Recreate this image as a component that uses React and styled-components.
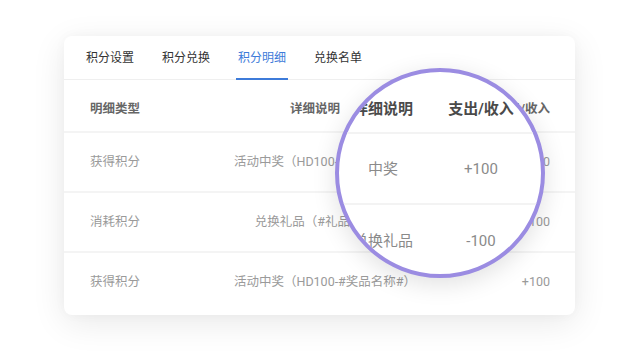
import React from "react";
import styled, { createGlobalStyle } from "styled-components";

const Global = createGlobalStyle`
  html, body { margin: 0; padding: 0; background: #ffffff; }
  body { font-family: Roboto, "Noto Sans CJK SC", sans-serif; }
`;

const Page = styled.div`
  width: 637px;
  height: 354px;
  box-sizing: border-box;
  padding: 36px 62px 0 64px;
  background: #ffffff;
`;

const Card = styled.div`
  position: relative;
  width: 511px;
  height: 279px;
  box-sizing: border-box;
  padding-bottom: 4px;
  background: #ffffff;
  border-radius: 8px;
  box-shadow: 0 8px 34px rgba(0, 0, 0, 0.09), 0 0 12px rgba(0, 0, 0, 0.03);
  display: flex;
  flex-direction: column;
`;

const TabBar = styled.div`
  display: flex;
  gap: 24px;
  height: 43px;
  padding-left: 20px;
  border-bottom: 1px solid #efefef;
`;

const Tab = styled.div`
  padding: 0 2px;
  display: flex;
  align-items: center;
  padding-top: 1px;
  font-size: 12px;
  line-height: 16px;
  color: ${(p) => (p.$active ? "#3d7bd9" : "#333333")};
  border-bottom: 2px solid ${(p) => (p.$active ? "#3d7bd9" : "transparent")};
  margin-bottom: -1px;
`;

const Row = styled.div`
  display: grid;
  grid-template-columns: 130px 210px 120px;
  padding: 0 25px 0 26px;
  align-items: center;
  height: ${(p) => (p.$head ? "51px" : "60px")};
  box-sizing: border-box;
  padding-top: ${(p) => (p.$head ? "6px" : "0")};
  border-top: ${(p) => (p.$first ? "none" : "2px solid #f4f4f4")};
`;

const Cell = styled.div`
  font-size: 12.5px;
  line-height: 16px;
  white-space: nowrap;
  color: ${(p) => (p.$head ? "#666666" : "#9a9a9a")};
  font-weight: ${(p) => (p.$head ? 600 : 400)};
  text-align: ${(p) => p.$align || "left"};
  padding-right: ${(p) => p.$pr || 0}px;
`;

const Lens = styled.div`
  position: absolute;
  left: 271px;
  top: 32px;
  width: 210px;
  height: 210px;
  box-sizing: border-box;
  border-radius: 50%;
  border: 4px solid #9b8ce2;
  background: #ffffff;
  overflow: hidden;
  box-shadow: 0 6px 24px rgba(0, 0, 0, 0.12);
`;

const LensRow = styled.div`
  display: grid;
  grid-template-columns: 88px 108px;
  align-items: center;
  width: 260px;
  margin-left: -4px;
  padding-left: 4px;
  box-sizing: border-box;
  height: ${(p) => (p.$head ? "60px" : "71px")};
  padding-top: ${(p) => (p.$head ? "14px" : "0")};
  border-top: ${(p) => (p.$first ? "none" : "2px solid #f3f3f3")};
`;

const LensCell = styled.div`
  text-align: center;
  white-space: nowrap;
  font-size: 15px;
  line-height: 20px;
  color: ${(p) => (p.$head ? "#4a4a4a" : "#8a8a8a")};
  font-weight: ${(p) => (p.$head ? 700 : 400)};
  margin-top: ${(p) => p.$mt || 0}px;
`;

const tabs = ["积分设置", "积分兑换", "积分明细", "兑换名单"];
const rows = [
  ["获得积分", "活动中奖（HD100-#奖品名称#）", "+100"],
  ["消耗积分", "兑换礼品（#礼品名称#）", "-100"],
  ["获得积分", "活动中奖（HD100-#奖品名称#）", "+100"],
];

export default function App() {
  return (
    <>
      <Global />
      <Page>
        <Card>
          <TabBar>
            {tabs.map((t, i) => (
              <Tab key={t} $active={i === 2}>
                {t}
              </Tab>
            ))}
          </TabBar>
          <Row $head $first>
            <Cell $head>明细类型</Cell>
            <Cell $head $align="right" $pr={90}>
              详细说明
            </Cell>
            <Cell $head $align="right">
              支出/收入
            </Cell>
          </Row>
          {rows.map((r, i) => (
            <Row key={i}>
              <Cell>{r[0]}</Cell>
              <Cell $align="center">{r[1]}</Cell>
              <Cell $align="right">{r[2]}</Cell>
            </Row>
          ))}
          <Lens>
            <LensRow $head $first>
              <LensCell $head>详细说明</LensCell>
              <LensCell $head>支出/收入</LensCell>
            </LensRow>
            <LensRow>
              <LensCell>中奖</LensCell>
              <LensCell>+100</LensCell>
            </LensRow>
            <LensRow>
              <LensCell $mt={2}>兑换礼品</LensCell>
              <LensCell $mt={2}>-100</LensCell>
            </LensRow>
          </Lens>
        </Card>
      </Page>
    </>
  );
}
